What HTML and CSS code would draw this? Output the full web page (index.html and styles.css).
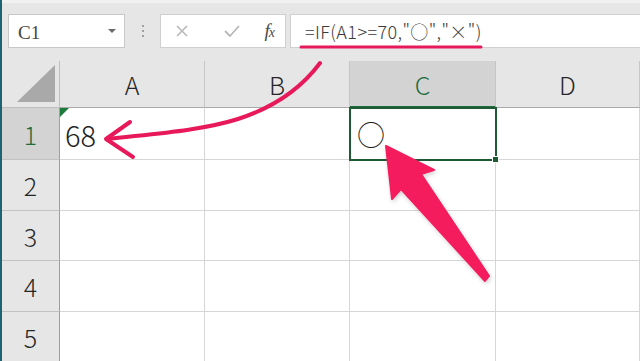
FILE: index.html
```html
<!DOCTYPE html>
<html lang="ja">

<head>
    <meta charset="UTF-8">
    <meta name="viewport" content="width=device-width, initial-scale=1.0">
    <title>IF関数</title>
    <link rel="stylesheet" href="styles.css">
</head>

<body>
    <div class="app">
        <div class="toolbar">
            <div class="name-box">
                <span class="name">C1</span>
                <span class="drop"></span>
            </div>
            <div class="grip"><i></i><i></i><i></i></div>
            <div class="fn-box">
                <svg class="fn-icon" width="16" height="16" viewBox="0 0 16 16">
                    <path d="M3 3 L13 13 M13 3 L3 13" stroke="#b8b8b8" stroke-width="1.6" fill="none" />
                </svg>
                <svg class="fn-icon" width="18" height="16" viewBox="0 0 18 16">
                    <path d="M2 8 L7 13 L16 3" stroke="#b8b8b8" stroke-width="1.8" fill="none" />
                </svg>
                <span class="fx"><i>f</i><i>x</i></span>
            </div>
            <div class="formula">
                <span class="formula-text">=IF(A1&gt;=70,"○","×")</span>
            </div>
        </div>

        <div class="sheet">
            <div class="corner"><span class="corner-tri"></span></div>
            <div class="col-head">A</div>
            <div class="col-head">B</div>
            <div class="col-head active">C</div>
            <div class="col-head">D</div>

            <div class="row-head active">1</div>
            <div class="cell flagged">68</div>
            <div class="cell"></div>
            <div class="cell selected"><span class="mark">○</span></div>
            <div class="cell"></div>

            <div class="row-head">2</div>
            <div class="cell"></div>
            <div class="cell"></div>
            <div class="cell"></div>
            <div class="cell"></div>

            <div class="row-head">3</div>
            <div class="cell"></div>
            <div class="cell"></div>
            <div class="cell"></div>
            <div class="cell"></div>

            <div class="row-head">4</div>
            <div class="cell"></div>
            <div class="cell"></div>
            <div class="cell"></div>
            <div class="cell"></div>

            <div class="row-head">5</div>
            <div class="cell"></div>
            <div class="cell"></div>
            <div class="cell"></div>
            <div class="cell"></div>
        </div>

        <!-- hand-drawn annotations -->
        <svg class="marks" width="640" height="361" viewBox="0 0 640 361">
            <defs>
                <filter id="soft" x="-20%" y="-20%" width="140%" height="140%">
                    <feDropShadow dx="1" dy="2" stdDeviation="2" flood-color="#000" flood-opacity="0.18" />
                </filter>
            </defs>
            <line x1="301" y1="47" x2="481" y2="47" stroke="#e8195b" stroke-width="3" stroke-linecap="round" />
            <path d="M320 63 C300 90 272 108 238 119 C200 131 150 134 107 139" stroke="#e8195b" stroke-width="4"
                fill="none" stroke-linecap="round" />
            <path d="M130 122 L106 139 L133 157" stroke="#e8195b" stroke-width="4" fill="none"
                stroke-linecap="round" stroke-linejoin="round" />
            <polygon points="386,146 434,170 421,174 489,276 485,281 401,189 392,199" fill="#f41c5d"
                stroke="#f41c5d" stroke-width="2" stroke-linejoin="round" filter="url(#soft)" />
        </svg>
    </div>
</body>

</html>
```

FILE: styles.css
```css
body {
    margin: 0;
    padding: 0;
    background: #ffffff;
    font-family: "Noto Sans CJK JP", "Noto Sans", sans-serif;
    color: #262626;
}

.app {
    position: relative;
    width: 640px;
    height: 361px;
    overflow: hidden;
    border-left: 2px solid #1d6472;
    box-sizing: border-box;
}

.toolbar {
    height: 61px;
    background: #e6e6e6;
    border-top: 3px solid #f1f1f1;
    box-sizing: border-box;
    display: flex;
    align-items: flex-start;
    padding-top: 11px;
    padding-left: 6px;
}

.name-box {
    width: 117px;
    height: 34px;
    background: #fff;
    border: 1px solid #c8c8c8;
    box-sizing: border-box;
    display: flex;
    align-items: center;
    justify-content: space-between;
    padding: 0 8px 0 9px;
}

.name {
    font-family: "Liberation Serif", serif;
    font-size: 19px;
    color: #444;
    padding-top: 3px;
}

.drop {
    width: 0;
    height: 0;
    border-left: 4px solid transparent;
    border-right: 4px solid transparent;
    border-top: 4px solid #6a6a6a;
}

.grip {
    width: 35px;
    height: 34px;
    display: flex;
    flex-direction: column;
    align-items: center;
    justify-content: center;
    gap: 3px;
}

.grip i {
    width: 2px;
    height: 2px;
    background: #a0a0a0;
}

.fn-box {
    width: 126px;
    height: 34px;
    background: #fff;
    border: 1px solid #cfcfcf;
    box-sizing: border-box;
    display: flex;
    align-items: center;
    justify-content: space-between;
    padding: 0 11px 0 13px;
}

.fn-icon:nth-child(2) {
    margin-left: 10px;
}

.fx {
    font-family: "Liberation Serif", serif;
    font-style: italic;
    font-size: 19px;
    color: #4a4a4a;
    letter-spacing: -1px;
}

.fx i:last-child {
    font-size: 14px;
}

.formula {
    flex: 1;
    height: 34px;
    margin-left: 4px;
    background: #fff;
    border: 1px solid #d0d0d0;
    border-right: none;
    box-sizing: border-box;
    display: flex;
    align-items: center;
    padding-left: 14px;
}

.formula-text {
    font-size: 18px;
    font-weight: 300;
    color: #3a3a3a;
    letter-spacing: 0.4px;
}

.sheet {
    display: grid;
    grid-template-columns: 58px 145px 145px 146px 1fr;
    grid-template-rows: 47px 52px 51px 50px 51px 51px;
}

.corner {
    background: #e6e6e6;
    border-right: 1px solid #bdbdbd;
    border-bottom: 1px solid #bdbdbd;
    position: relative;
}

.corner-tri {
    position: absolute;
    right: 4px;
    bottom: 5px;
    width: 0;
    height: 0;
    border-left: 38px solid transparent;
    border-bottom: 37px solid #a9a9a9;
}

.col-head {
    background: #e6e6e6;
    border-right: 1px solid #c6c6c6;
    border-bottom: 1px solid #a9a9a9;
    display: flex;
    align-items: center;
    justify-content: center;
    font-size: 25px;
    font-weight: 300;
    color: #262626;
}

.col-head.active {
    background: #d3d3d3;
    color: #1e6b3c;
    border-bottom: 2px solid #1e6b3c;
}

.row-head {
    background: #e6e6e6;
    border-right: 1px solid #9e9e9e;
    border-bottom: 1px solid #c2c2c2;
    display: flex;
    align-items: center;
    justify-content: center;
    font-size: 25px;
    font-weight: 300;
    color: #262626;
}

.row-head.active {
    background: #d3d3d3;
    color: #1e6b3c;
}

.cell {
    border-right: 1px solid #d6d6d6;
    border-bottom: 1px solid #d6d6d6;
    display: flex;
    align-items: center;
    padding-left: 5px;
    font-size: 29px;
    font-weight: 300;
    color: #1e1e1e;
}

.cell.flagged {
    position: relative;
}

.cell.flagged::before {
    content: "";
    position: absolute;
    left: 0;
    top: 0;
    border-top: 9px solid #1e7a3a;
    border-right: 9px solid transparent;
}

.cell.selected {
    position: relative;
    outline: 2px solid #1e5b35;
    outline-offset: -1px;
    padding-left: 7px;
}

.cell.selected::after {
    content: "";
    position: absolute;
    right: -4px;
    bottom: -4px;
    width: 5px;
    height: 5px;
    background: #1e5b35;
    border: 1px solid #fff;
}

.mark {
    font-size: 28px;
    line-height: 1;
    color: #222;
}

.marks {
    position: absolute;
    left: -2px;
    top: 0;
    pointer-events: none;
}
```
